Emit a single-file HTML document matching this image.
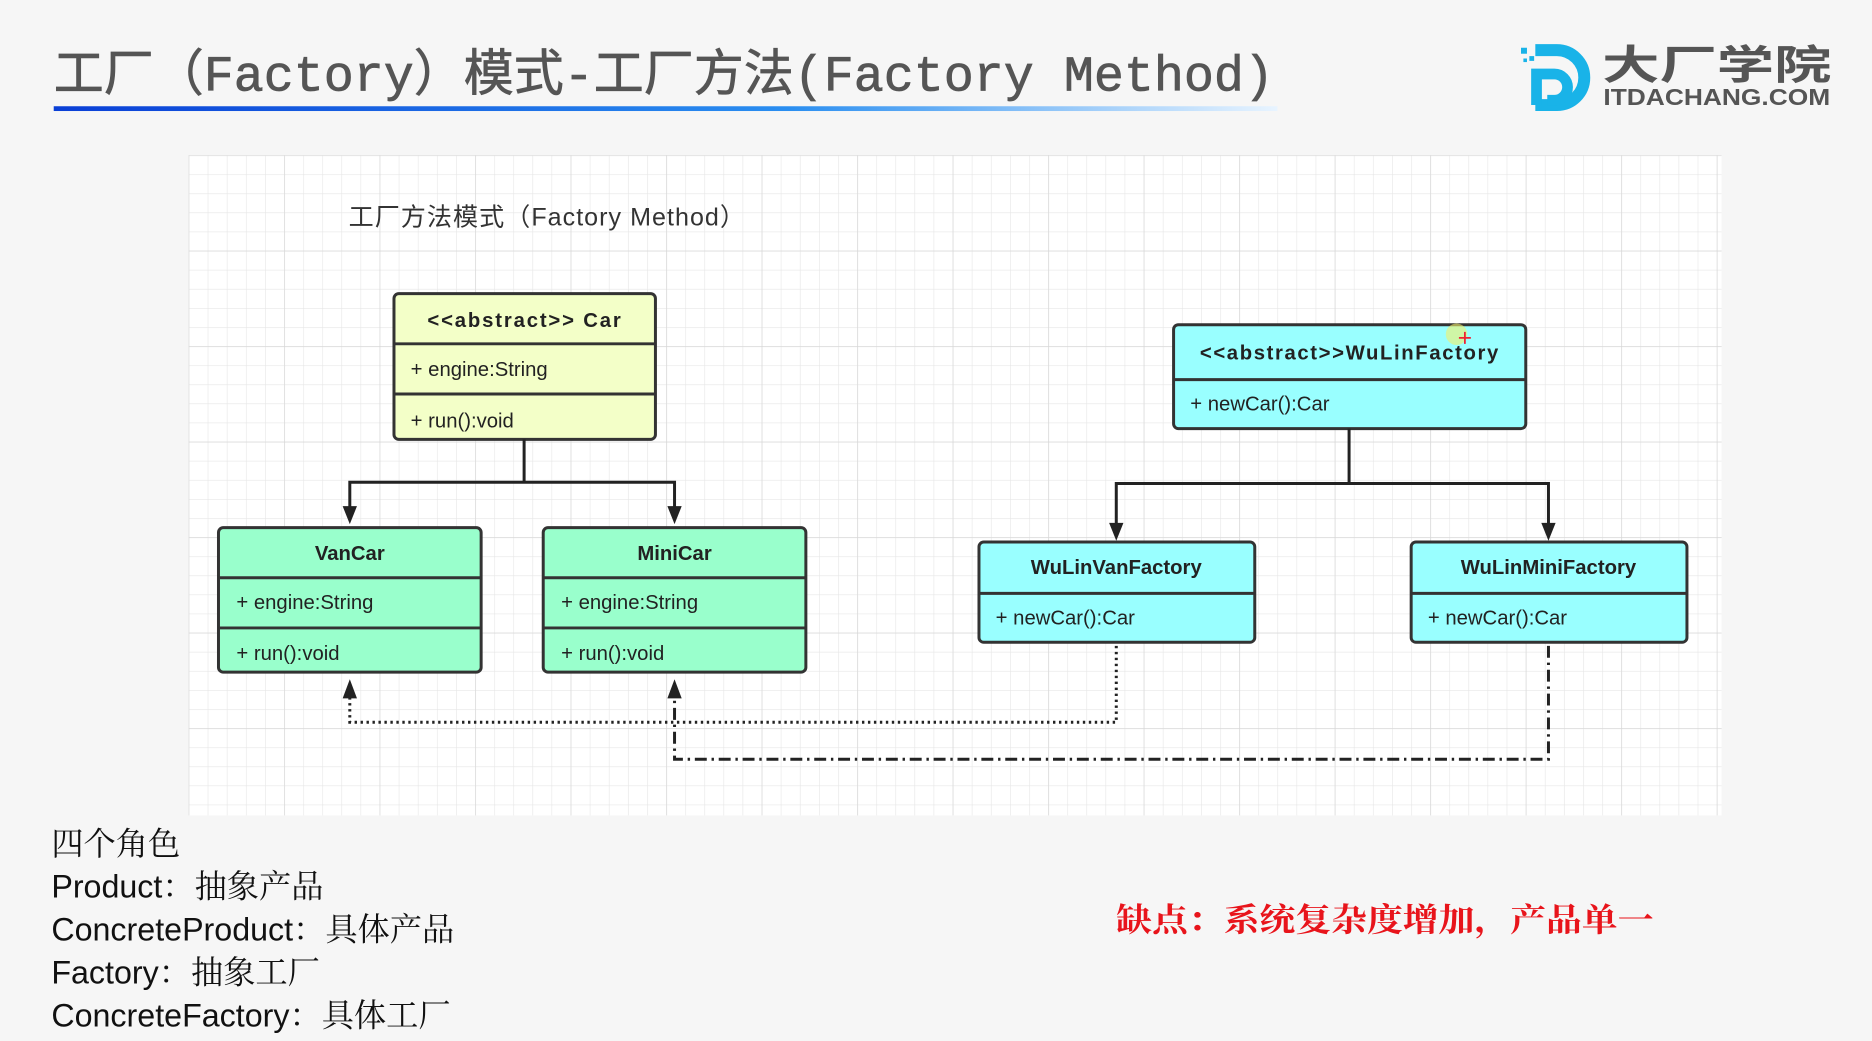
<!DOCTYPE html>
<html><head><meta charset="utf-8"><style>
html,body{margin:0;padding:0;width:1872px;height:1041px;overflow:hidden;background:#f7f7f7}
svg{display:block}
</style></head><body>
<svg width="1872" height="1041" viewBox="0 0 1568 872" preserveAspectRatio="none" xmlns="http://www.w3.org/2000/svg">
<defs>
<pattern id="mg" width="16" height="16" patternUnits="userSpaceOnUse" x="158" y="130"><path d="M16 0H0V16" fill="none" stroke="#e6e6e6" stroke-width="1"/></pattern>
<pattern id="Mg" width="80" height="80" patternUnits="userSpaceOnUse" x="158" y="130"><path d="M80 0H0V80" fill="none" stroke="#d6d6d6" stroke-width="1"/></pattern>
<linearGradient id="ul" x1="0" x2="1"><stop offset="0" stop-color="#0a3fd6"/><stop offset="0.6" stop-color="#2a8ef0"/><stop offset="1" stop-color="#e8f4ff"/></linearGradient>
</defs>
<rect width="1568" height="872" fill="#f6f6f6"/>
<text x="45" y="76" font-family="Liberation Mono, Noto Sans CJK SC, monospace" font-size="42" fill="#555" stroke="#555" stroke-width="0.6" textLength="1022" lengthAdjust="spacingAndGlyphs">工厂（Factory）模式-工厂方法(Factory Method)</text>
<rect x="45" y="89" width="1025" height="4" fill="url(#ul)"/>
<path d="M1286 42 h18 a23 23 0 0 1 0 46 h-18" fill="none" stroke="#19b3e8" stroke-width="10"/>
<path d="M1287 88 V62 h15 a11 11 0 0 1 0 22 h-6" fill="none" stroke="#19b3e8" stroke-width="9"/>
<rect x="1274" y="40" width="5" height="5" fill="#19b3e8"/><rect x="1281" y="47" width="4" height="4" fill="#19b3e8"/><rect x="1276" y="49" width="3" height="3" fill="#19b3e8"/>
<text x="1342" y="66" font-family="Noto Sans CJK SC, sans-serif" font-weight="bold" font-size="34" fill="#555" textLength="192" lengthAdjust="spacingAndGlyphs">大厂学院</text>
<text x="1343" y="88" font-family="Liberation Sans, sans-serif" font-weight="bold" font-size="19" fill="#555" textLength="190" lengthAdjust="spacingAndGlyphs">ITDACHANG.COM</text>
<rect x="158" y="130" width="1284" height="553" fill="#fff"/>
<rect x="158" y="130" width="1284" height="553" fill="url(#mg)"/>
<rect x="158" y="130" width="1284" height="553" fill="url(#Mg)"/>
<text x="292" y="189" font-family="Liberation Sans, Noto Sans CJK SC, sans-serif" font-size="21" fill="#333" textLength="332">工厂方法模式（Factory Method）</text>
<g font-family="Liberation Sans, Noto Sans CJK SC, sans-serif" font-size="17" fill="#222" stroke-width="2.5">
<rect x="330" y="246" width="219" height="122" rx="4" fill="#f3ffc8" stroke="#333"/>
<path d="M330 288H549M330 330H549" stroke="#333" stroke-width="2.5"/>
<text x="439" y="274" text-anchor="middle" font-weight="bold" textLength="162">&lt;&lt;abstract&gt;&gt; Car</text>
<text x="344" y="315">+ engine:String</text><text x="344" y="358">+ run():void</text>
<rect x="183" y="442" width="220" height="121" rx="4" fill="#99ffcc" stroke="#333"/>
<path d="M183 484H403M183 526H403" stroke="#333" stroke-width="2.5"/>
<text x="293" y="469" text-anchor="middle" font-weight="bold">VanCar</text>
<text x="198" y="510">+ engine:String</text><text x="198" y="553">+ run():void</text>
<rect x="455" y="442" width="220" height="121" rx="4" fill="#99ffcc" stroke="#333"/>
<path d="M455 484H675M455 526H675" stroke="#333" stroke-width="2.5"/>
<text x="565" y="469" text-anchor="middle" font-weight="bold">MiniCar</text>
<text x="470" y="510">+ engine:String</text><text x="470" y="553">+ run():void</text>
<rect x="983" y="272" width="295" height="87" rx="4" fill="#99ffff" stroke="#333"/>
<path d="M983 318H1278" stroke="#333" stroke-width="2.5"/>
<text x="1130" y="301" text-anchor="middle" font-weight="bold" textLength="250">&lt;&lt;abstract&gt;&gt;WuLinFactory</text>
<text x="997" y="344">+ newCar():Car</text>
<circle cx="1220" cy="280" r="9" fill="#f4f06a" opacity="0.6"/>
<path d="M1222 283h10M1227 278v10" stroke="#e23" stroke-width="1.5"/>
<rect x="820" y="454" width="231" height="84" rx="4" fill="#99ffff" stroke="#333"/>
<path d="M820 497H1051" stroke="#333" stroke-width="2.5"/>
<text x="935" y="481" text-anchor="middle" font-weight="bold">WuLinVanFactory</text>
<text x="834" y="523">+ newCar():Car</text>
<rect x="1182" y="454" width="231" height="84" rx="4" fill="#99ffff" stroke="#333"/>
<path d="M1182 497H1413" stroke="#333" stroke-width="2.5"/>
<text x="1297" y="481" text-anchor="middle" font-weight="bold">WuLinMiniFactory</text>
<text x="1196" y="523">+ newCar():Car</text>
</g>
<g fill="none" stroke="#222" stroke-width="2.5">
<path d="M439 368V404H293V426M439 404H565V426"/>
<path d="M1130 359V405H935V440M1130 405H1297V440"/>
<path d="M935 541V605H293V582" stroke-dasharray="2 3"/>
<path d="M1297 541V636H565V582" stroke-dasharray="10 4 2 4"/>
</g>
<g fill="#222">
<path d="M287 424h12l-6 15z"/><path d="M559 424h12l-6 15z"/>
<path d="M929 438h12l-6 15z"/><path d="M1291 438h12l-6 15z"/>
<path d="M287 585h12l-6 -16z"/><path d="M559 585h12l-6 -16z"/>
</g>
<g font-family="Liberation Sans, Noto Serif CJK SC, serif" font-size="27" fill="#111">
<text x="43" y="716">四个角色</text>
<text x="43" y="752">Product：抽象产品</text>
<text x="43" y="788">ConcreteProduct：具体产品</text>
<text x="43" y="824">Factory：抽象工厂</text>
<text x="43" y="860">ConcreteFactory：具体工厂</text>
</g>
<text x="935" y="780" font-family="Noto Serif CJK SC, serif" font-weight="bold" font-size="27" fill="#e8141b" textLength="450" lengthAdjust="spacingAndGlyphs">缺点：系统复杂度增加，产品单一</text>
</svg>
</body></html>
